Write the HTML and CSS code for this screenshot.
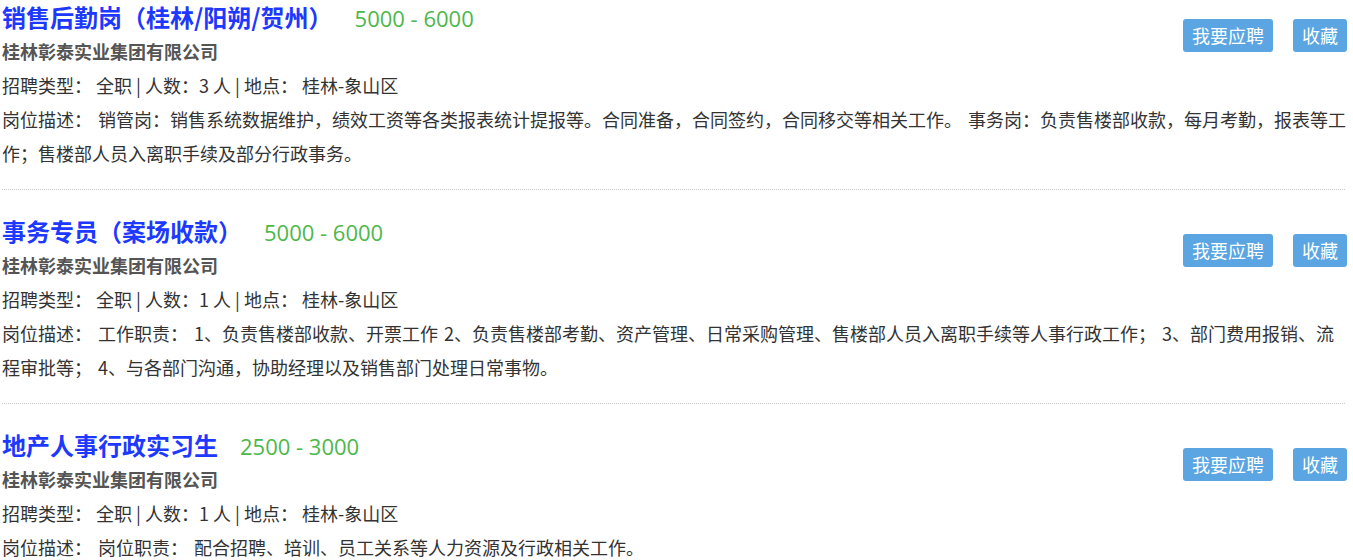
FILE: index.html
```html
<!DOCTYPE html>
<html>
  <head>
    <meta charset="utf-8">
    <meta name="viewport" content="width=device-width, initial-scale=1">
    <title>招聘职位</title>
    <link rel="stylesheet" href="styles.css">
  </head>
  <body>
    <div class="job-list">
      <div class="job">
        <div class="job-actions">
          <button class="btn">我要应聘</button>
          <button class="btn">收藏</button>
        </div>
        <h2 class="job-title">销售后勤岗（桂林/阳朔/贺州）<span class="salary">5000 - 6000</span></h2>
        <p class="company">桂林彰泰实业集团有限公司</p>
        <p class="info">招聘类型： 全职 | 人数：3 人 | 地点： 桂林-象山区</p>
        <p class="info desc">岗位描述： 销管岗：销售系统数据维护，绩效工资等各类报表统计提报等。合同准备，合同签约，合同移交等相关工作。 事务岗：负责售楼部收款，每月考勤，报表等工作；售楼部人员入离职手续及部分行政事务。</p>
      </div>
      <div class="job">
        <div class="job-actions">
          <button class="btn">我要应聘</button>
          <button class="btn">收藏</button>
        </div>
        <h2 class="job-title">事务专员（案场收款）<span class="salary">5000 - 6000</span></h2>
        <p class="company">桂林彰泰实业集团有限公司</p>
        <p class="info">招聘类型： 全职 | 人数：1 人 | 地点： 桂林-象山区</p>
        <p class="info desc">岗位描述： 工作职责： 1、负责售楼部收款、开票工作 2、负责售楼部考勤、资产管理、日常采购管理、售楼部人员入离职手续等人事行政工作； 3、部门费用报销、流程审批等； 4、与各部门沟通，协助经理以及销售部门处理日常事物。</p>
      </div>
      <div class="job">
        <div class="job-actions">
          <button class="btn">我要应聘</button>
          <button class="btn">收藏</button>
        </div>
        <h2 class="job-title">地产人事行政实习生<span class="salary">2500 - 3000</span></h2>
        <p class="company">桂林彰泰实业集团有限公司</p>
        <p class="info">招聘类型： 全职 | 人数：1 人 | 地点： 桂林-象山区</p>
        <p class="info desc">岗位描述： 岗位职责： 配合招聘、培训、员工关系等人力资源及行政相关工作。</p>
      </div>
    </div>
  </body>
</html>
```

FILE: styles.css
```css
body, html { margin: 0; padding: 0; background: #fff; font-family: "Microsoft YaHei", "Noto Sans CJK SC", "Noto Sans", sans-serif; color: #333; }
.job-list { width: 1343px; padding-left: 2px; }
.job { padding: 24px 0 19px; border-bottom: 1px dotted #c8c8c8; }
.job:first-child { padding-top: 0; }
.job-actions { float: right; display: flex; gap: 20px; margin-top: 20px; margin-right: -2px; }
.job:first-child .job-actions { margin-top: 19px; }
.btn { background-color: #5aa5e2; color: #fff; border: none; border-radius: 3px; height: 33px; padding: 0 9px; font-family: inherit; font-size: 18px; line-height: 33px; cursor: pointer; }
.job-title { margin: 0; height: 34px; font-size: 24px; line-height: 34px; font-weight: bold; color: #1d38ff; }
.salary { margin-left: 22px; font-family: "Open Sans", "Noto Sans", sans-serif; font-size: 22px; line-height: 1; font-weight: normal; color: #4cb84a; }
.company { margin: 0; font-size: 18px; line-height: 34px; font-weight: bold; color: #555; }
.info { margin: 0; font-size: 18px; line-height: 34px; }
.desc { margin-right: -5px; word-spacing: 2px; }
```
